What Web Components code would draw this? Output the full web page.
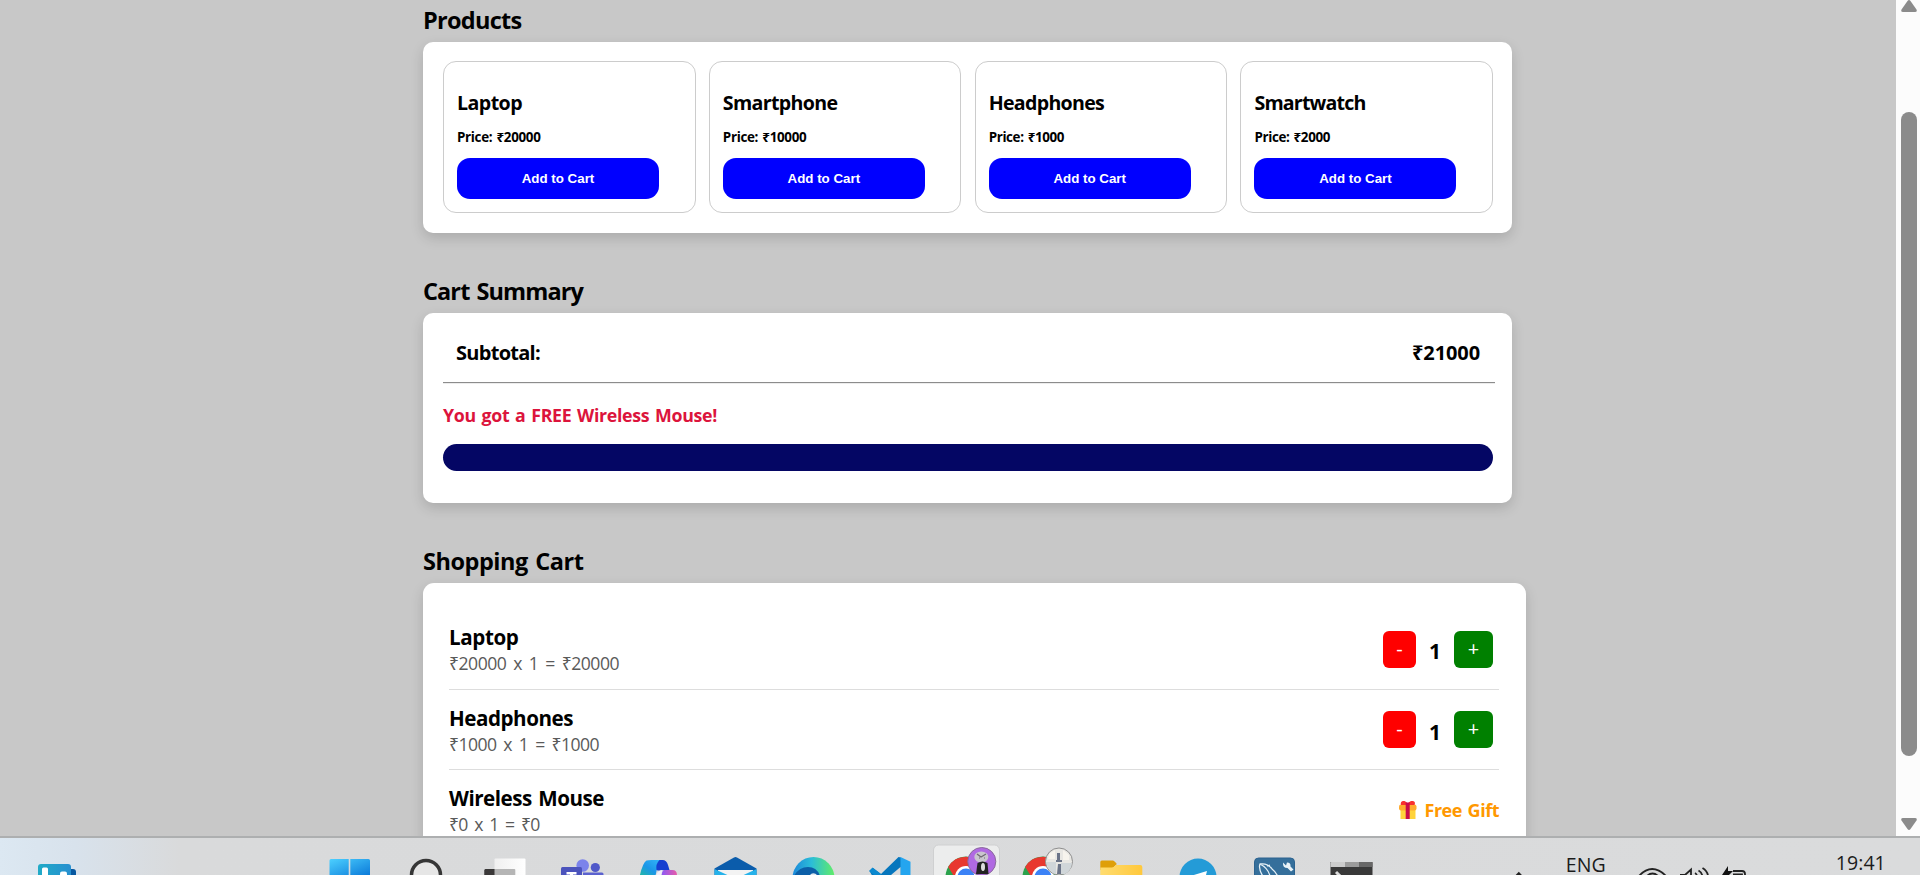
<!DOCTYPE html>
<html lang="en">
<head>
<meta charset="utf-8">
<title>Shopping Cart</title>
<style>
html,body{margin:0;height:100%;overflow:hidden}
body{font-family:"Open Sans","Noto Sans",sans-serif;color:#000;background:#c8c8c8}
</style>
</head>
<body>
<app-desktop></app-desktop>
<script>
const define = (name, html, setup) => customElements.define(name, class extends HTMLElement {
  connectedCallback() {
    if (this.shadowRoot) return;
    this.attachShadow({ mode: 'open' });
    const t = document.createElement('template');
    t.innerHTML = typeof html === 'function' ? html(this) : html;
    this.shadowRoot.append(t.content.cloneNode(true));
    if (setup) setup(this);
  }
});

/* Text tracked to a given advance width */
define('fit-text', '<style>:host{display:inline-block;white-space:nowrap;word-spacing:.08em}</style><span><slot></slot></span>', el => {
  const w = parseFloat(el.getAttribute('w'));
  const natural = el.shadowRoot.querySelector('span').getBoundingClientRect().width;
  el.style.letterSpacing = ((w - natural) / el.textContent.length) + 'px';
});

define('page-section', el => `<style>
:host{display:block;margin-bottom:38px;width:1089px}
:host([wide]){width:1103px}
h2{margin:0 0 2px;font-size:23.5px;line-height:41px;height:40px;font-weight:700}
.card{background:#fff;border-radius:10px;box-shadow:0 5px 13px rgba(0,0,0,.15);box-sizing:border-box;padding:19px 19px 20px 20px;height:${el.getAttribute('h')}px}
:host([wide]) .card{padding:26px 27px 0 26px;border-radius:11px}
</style><h2><fit-text w="${el.getAttribute('w')}">${el.getAttribute('heading')}</fit-text></h2><div class="card"><slot></slot></div>`);

define('product-card', el => `<style>
:host{display:block;box-sizing:border-box;border:1px solid #ccc;border-radius:13px;height:152px;padding:26px 13px 0}
h3{margin:0;font-size:19.6px;line-height:30px;height:30px}
p{margin:9px 0 11px;font-size:13.4px;line-height:21px;height:20px;font-weight:700}
button{display:block;width:202px;height:41px;border:0;border-radius:13px;background:#00f;color:#fff;font:bold 13.33px "Liberation Sans",sans-serif;padding:0}
button fit-text{word-spacing:0}
</style><h3><fit-text w="${el.getAttribute('nw')}">${el.getAttribute('name')}</fit-text></h3>
<p><fit-text w="${el.getAttribute('pw')}">Price: ₹${el.getAttribute('price')}</fit-text></p>
<button><fit-text w="72.5">Add to Cart</fit-text></button>`);

define('product-grid', `<style>:host{display:grid;grid-template-columns:repeat(4,1fr);gap:13.33px}</style><slot></slot>`);

define('cart-summary', `<style>
.row{display:flex;justify-content:space-between;font-size:20px;font-weight:700;line-height:30px;height:30px;padding:6px 13px 0}
.rule{margin-top:14px;height:1px;width:1051.5px;background:#8c8c8c;border-bottom:1px solid #ececec}
.msg{color:#dc143c;font-size:17.8px;font-weight:700;line-height:28px;height:28px;margin-top:17px}
.bar{height:27px;margin-top:15px;border-radius:13.5px;background:#040664}
</style>
<div class="row"><fit-text w="84">Subtotal:</fit-text><fit-text w="68">₹21000</fit-text></div>
<div class="rule"></div>
<div class="msg"><fit-text w="274">You got a FREE Wireless Mouse!</fit-text></div>
<div class="bar"></div>`);

define('qty-stepper', `<style>
:host{display:flex;align-items:center;margin-right:6px}
button{height:37px;border:0;border-radius:6px;color:#fff;font:20px "Open Sans",sans-serif;padding:0 0 2px}
.m{width:33px;background:red}.p{width:39px;background:green}
span{width:38px;text-align:center;font-size:21px;font-weight:700;line-height:30px;padding-top:4px}
</style><button class="m">-</button><span>1</span><button class="p">+</button>`);

define('free-gift', `<style>
:host{display:flex;align-items:center;color:#ff9800;font-size:18px;font-weight:700;line-height:28px;gap:8px;padding-top:1px}
svg{display:block}
</style>
<svg width="18" height="20" viewBox="0 0 18 20"><rect x="1.5" y="8" width="15" height="11" fill="#ffd33b"/><rect x="0" y="4.5" width="17.5" height="6" rx="2" fill="#ffab2e"/><path d="M8.5 5H2C1 1.500 3.500.5 5.500 1Q8 1.800 8.700 4Q9.500 1.800 12 1C14.500.5 17 1.500 15.500 5z" fill="#f8312f"/><rect x="6.700" y="2.500" width="4" height="16.500" fill="#ca0b4a"/></svg>
<fit-text w="74.5">Free Gift</fit-text>`);

define('cart-row', el => `<style>
:host{display:flex;justify-content:space-between;align-items:center;box-sizing:border-box;height:80px;border-bottom:1px solid #ddd}
:host([first]){height:81px}
.n{font-size:20.6px;font-weight:700;line-height:29px;height:28px}
.s{font-size:17.6px;line-height:24px;height:24px;color:#5a5a5a}
.s fit-text{word-spacing:.16em}
</style><div><div class="n"><fit-text w="${el.getAttribute('nw')}">${el.getAttribute('name')}</fit-text></div>
<div class="s"><fit-text w="${el.getAttribute('sw')}">${el.getAttribute('sum')}</fit-text></div></div><slot></slot>`);

define('page-scrollbar', `<style>
:host{display:flex;flex-direction:column;align-items:center;width:24px;background:#fcfcfc;box-sizing:border-box;padding-left:1px;height:836px}
i{display:block;width:16px;height:644px;margin:100px 0 62px;border-radius:8px;background:#8b8b8b}
svg{display:block;flex:none}
</style>
<svg width="16" height="12"><path d="M6.500 1Q8-1 9.500 1L15.500 9.500Q16.500 12 14 12H2Q-.5 12 .5 9.500z" fill="#8b8b8b"/></svg><i></i>
<svg width="16" height="12"><path d="M6.500 11Q8 13 9.500 11L15.500 2.500Q16.500 0 14 0H2Q-.5 0 .5 2.500z" fill="#8b8b8b"/></svg>`);

const chrome = (cx) => `<circle cx="${cx}" cy="39" r="20.500" fill="#2ba24c"/><path d="M${cx-17.8} 29A20.500 20.500 0 0 1 ${cx+17.8} 29L${cx} 33L${cx-9} 43z" fill="#e8382f"/><circle cx="${cx}" cy="39" r="11" fill="#fff"/><circle cx="${cx}" cy="39" r="8.500" fill="#3b82f6"/>`;
/* Upper parts of the taskbar icons; the window edge cuts them at 37px */
const icons = {
start:`<defs><linearGradient id="g" x1="0" y1="0" x2="1" y2="1"><stop stop-color="#4cd0ff"/><stop offset="1" stop-color="#0a78d8"/></linearGradient></defs><path d="M20 21h17.700v17H18.500V22.500Q18.500 21 20 21zM39.300 21h18.200q1.500 0 1.500 1.500V38H39.300z" fill="url(#g)"/>`,
search:`<circle cx="38" cy="37" r="14.500" fill="#e6e6e6" stroke="#363636" stroke-width="3.500"/>`,
task:`<defs><linearGradient id="g"><stop stop-color="#f0f0f0"/><stop offset="1" stop-color="#fff"/></linearGradient></defs><rect x="29.500" y="20.500" width="31" height="20" rx="1" fill="url(#g)"/><rect x="19.300" y="31" width="31" height="10" rx="1" fill="#b5b5b5"/><path d="M20.300 31h9.200v8H19.300v-7z" fill="#3a3838"/>`,
teams:`<path d="M41 34.500h19q1.500 0 1.500 1.500v4H41z" fill="#5b62cf"/><circle cx="40.700" cy="27.500" r="6.300" fill="#7b83eb"/><circle cx="53.300" cy="29.500" r="4.600" fill="#5059c9"/><rect x="19" y="29" width="21" height="14" rx="1.500" fill="#4b53bc"/><path d="M24.500 34h10v2.500h-3.500v3h-3v-3h-3.500z" fill="#fff"/>`,
copilot:`<defs><linearGradient id="g" x1="0" y1="1" x2="1" y2="0"><stop stop-color="#24bd9b"/><stop offset=".45" stop-color="#1b96e8"/><stop offset="1" stop-color="#36b9fa"/></linearGradient><linearGradient id="h"><stop stop-color="#8a58f6"/><stop offset="1" stop-color="#e85ba8"/></linearGradient></defs><g transform="translate(1.500)"><path d="M19 39Q22 25 26 22.500Q28 22 31 22H43Q37 25 35 38z" fill="url(#g)"/><path d="M39 22H42Q46 22 47.500 27L49 32H43Q38 33 36 32Q35 26 39 22z" fill="#153fd0"/><path d="M43 32h9q5 0 4.500 7H41q0-5 2-7z" fill="url(#h)"/><path d="M35 39q2-7 7-7l-2 7z" fill="#f1eef8"/></g>`,
mail:`<g transform="translate(1)"><path d="M17.500 30.500L37 19.500Q38.500 18.700 40 19.500L59.500 30.500V40H17.500z" fill="#0b5cab"/><path d="M21 32h35v7H21z" fill="#f3f3f3"/><path d="M17.500 31L39 41H17.500zM59.500 31L38 41H59.500z" fill="#26b2ea"/></g>`,
edge:`<defs><linearGradient id="g"><stop stop-color="#1c88da"/><stop offset=".45" stop-color="#2bbdd8"/><stop offset="1" stop-color="#61ed67"/></linearGradient></defs><g transform="translate(1)"><circle cx="39.500" cy="40" r="21" fill="url(#g)"/><path d="M19 40Q24 29 34 29Q44 29 46.500 40z" fill="#0c5fa8"/><path d="M35 39Q37 33.500 42 36l2 3z" fill="#dfe8ef"/></g>`,
vscode:`<g transform="translate(1.500)"><path d="M18 33l3.500-3 8 6L47 19l2.500.500V40H22z" fill="#0676bd"/><path d="M49 19l10 4.700V40H49z" fill="#24a5ef"/><path d="M17.500 33l3.500-3.500 9 7-4 3z" fill="#0b89cf"/><path d="M49 29V40H36z" fill="#dadbdc"/></g>`,
chromeA:`<rect x="6.500" y="7" width="66" height="40" rx="5" fill="#eceded" stroke="#cfd0d1"/>${chrome(39)}<circle cx="54.800" cy="23.500" r="14" fill="#b069e2" stroke="#8b6b9c"/><ellipse cx="54.300" cy="19" rx="7" ry="5.500" fill="#c9c5ce"/><path d="M50 16l4 3 5-3M52 20h1M57 20h1" stroke="#6d6670" stroke-width="1.200" fill="none"/><path d="M50.500 25q5-3 10 0l1 11H49z" fill="#222"/><ellipse cx="56" cy="29" rx="2" ry="4" fill="#ddd"/>`,
chromeB:`${chrome(39)}<circle cx="55" cy="23.500" r="13.500" fill="#e8e7e3" stroke="#8e8e8e"/><path d="M42 24h10v12q-8-2-10-12zM57 25h11q-1 8-7 11h-4z" fill="#d0d6d9"/><path d="M53 15h3v7h2v2h-6v-2h1zM54 26h3v10h-4z" fill="#6b7488"/><path d="M45 16l6-4v9h-7zM59 12l6 5v5h-6z" fill="#f7f4ed"/>`,
folder:`<defs><linearGradient id="g" x2="1"><stop stop-color="#ffdc70"/><stop offset="1" stop-color="#ffc83c"/></linearGradient></defs><g transform="translate(.8)"><path d="M18.500 32V24q0-1.500 1.500-1.500H31q1.500 0 4 3.500L30 31z" fill="#df9f08"/><path d="M18.500 29.500H30q2 0 4-2.500H58.500q2 0 2 2V40h-42z" fill="url(#g)"/></g>`,
telegram:`<circle cx="39" cy="39" r="18.500" fill="#249bd7"/><path d="M25 40L48 33l-2 8z" fill="#fff"/>`,
mysql:`<rect x="18.500" y="20" width="40" height="24" rx="4" fill="#356f9b" stroke="#2c6390"/><path d="M28 40Q22 31 24 26Q32 25 36 31Q40 34 42 39M24 26Q32 30 34 38M31 28l3-1" stroke="#e6f1f7" stroke-width="1.300" fill="none"/><path d="M47 24.500l3 3 1-3q4 0 3.500 4l3 3-2.500 2-3.500-3.500q-5 0-4.500-5.500z" fill="#e9f3f8"/>`,
terminal:`<path d="M17.500 24h42v16h-42z" fill="#393939"/><path d="M17.500 25q0-1 1-1H32v5H17.500z" fill="#ccc"/><path d="M32 24h14v5H32z" fill="#9b9b9b"/><path d="M46 24h12.500q1 0 1 1v4H46z" fill="#686868"/><path d="M23 34l5 5" stroke="#ddd" stroke-width="3"/>`
};
define('task-icon', el => `<style>:host{display:block;flex:none;width:77.1px;height:37px}svg{display:block}</style><svg width="77" height="37" viewBox="0 0 77 37">${icons[el.getAttribute('icon')]}</svg>`);

define('task-bar', `<style>
:host{display:flex;box-sizing:border-box;height:39px;border-top:2px solid #adafb0;background:linear-gradient(90deg,#dce8f2 0,#d8e2ec 75px,#d9dadb 180px,#dadbdc 100%);overflow:hidden}
.w{width:310.5px;flex:none}
svg{display:block;flex:none}
.t{font-size:19.500px;line-height:20px;height:20px;color:#1b1b1b;white-space:nowrap}
.eng{margin:17px 0 0;width:61px}
.time{margin:15px 0 0;width:84px}
.chev{margin-left:119px}
</style>
<div class="w"><svg width="100" height="37"><defs><linearGradient id="g"><stop stop-color="#20abc7"/><stop offset="1" stop-color="#278fd0"/></linearGradient></defs><rect x="60" y="31" width="16" height="12" rx="3" fill="#0858a0"/><rect x="38" y="26" width="33" height="20" rx="3" fill="url(#g)"/><rect x="42" y="29.500" width="6" height="12" rx="1.500" fill="#fff"/><rect x="60" y="33.500" width="7" height="8" rx="2" fill="#fff"/></svg></div>
${Object.keys(icons).map(k => `<task-icon icon="${k}"></task-icon>`).join('')}
<svg class="chev" width="57" height="37"><path d="M5.500 40L9.800 35.500L14 40" stroke="#222" stroke-width="2.500" fill="none"/></svg>
<div class="t eng"><fit-text w="40">ENG</fit-text></div>
<svg width="209" height="37"><g fill="none" stroke="#222" stroke-width="1.800"><path d="M12 38Q25 24 39 38M18 40Q25.500 31 33 40"/><path d="M53 37h5l6-5.500V38M68 35q2 1 2 4M71.500 32.500q3.500 2 4 6M75.500 30q5 3 5.500 8"/><path d="M106 33h9q3 0 3 3v3M106 36.500h9v3"/></g><path d="M101 28l-6 9h5l-1 3 7-7h-5z" fill="#111"/></svg>
<div class="t time"><fit-text w="50">19:41</fit-text></div>`);

define('app-desktop', `<style>
:host{display:flex;flex-direction:column;width:1920px;height:875px;overflow:hidden}
.view{display:flex;height:836px;flex:none;overflow:hidden;background:#c8c8c8}
main{width:1896px;box-sizing:border-box;padding-left:423px;flex:none}
task-bar{flex:none}
</style>
<div class="view"><main>
<page-section heading="Products" w="98.500" h="191"><product-grid>
<product-card name="Laptop" nw="65" price="20000" pw="83.500"></product-card>
<product-card name="Smartphone" nw="114.500" price="10000" pw="83.500"></product-card>
<product-card name="Headphones" nw="115.500" price="1000" pw="75.500"></product-card>
<product-card name="Smartwatch" nw="111" price="2000" pw="75.500"></product-card>
</product-grid></page-section>
<page-section heading="Cart Summary" w="160" h="190"><cart-summary></cart-summary></page-section>
<page-section wide heading="Shopping Cart" w="160.500" h="300">
<cart-row first name="Laptop" nw="69.500" sum="₹20000 x 1 = ₹20000" sw="170"><qty-stepper></qty-stepper></cart-row>
<cart-row name="Headphones" nw="124" sum="₹1000 x 1 = ₹1000" sw="150"><qty-stepper></qty-stepper></cart-row>
<cart-row name="Wireless Mouse" nw="155" sum="₹0 x 1 = ₹0" sw="90.500"><free-gift></free-gift></cart-row>
</page-section>
</main><page-scrollbar></page-scrollbar></div>
<task-bar></task-bar>`);
</script>
</body>
</html>
